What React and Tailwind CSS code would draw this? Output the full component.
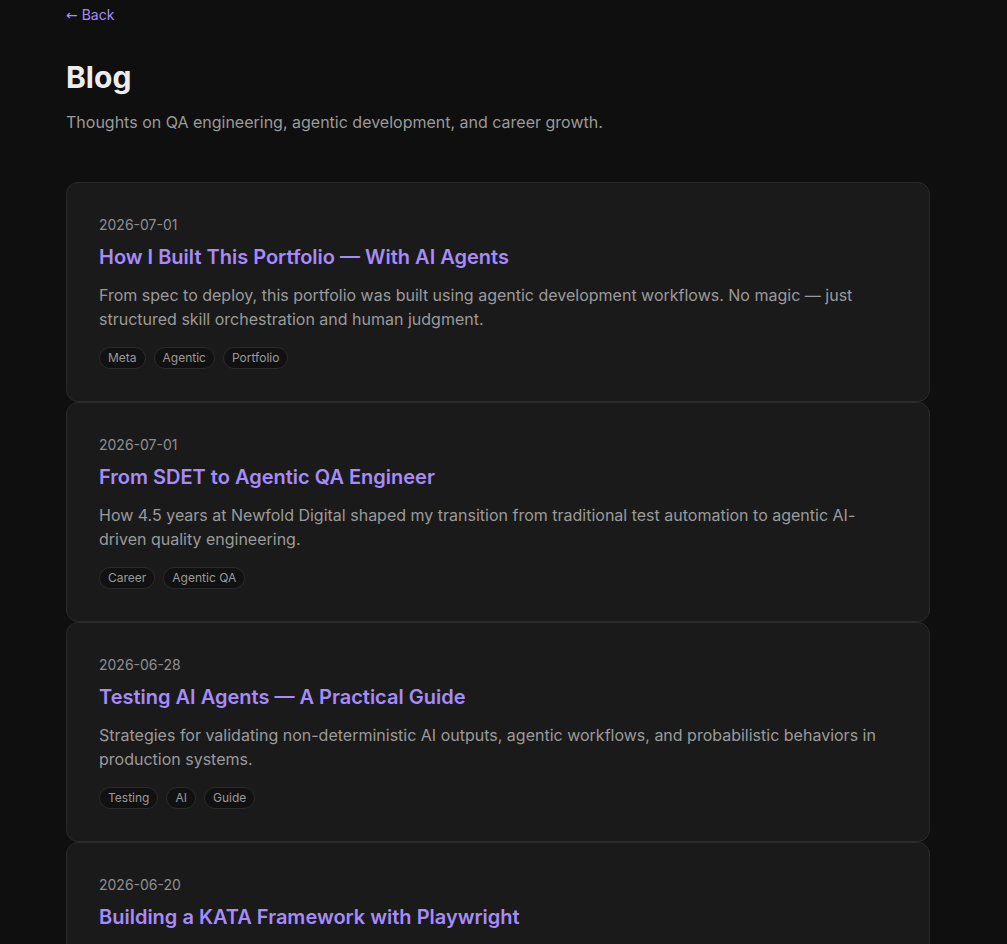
import React from 'react';

const posts = [
  {
    date: '2026-07-01',
    title: 'How I Built This Portfolio — With AI Agents',
    excerpt:
      'From spec to deploy, this portfolio was built using agentic development workflows. No magic — just structured skill orchestration and human judgment.',
    tags: ['Meta', 'Agentic', 'Portfolio'],
  },
  {
    date: '2026-07-01',
    title: 'From SDET to Agentic QA Engineer',
    excerpt:
      'How 4.5 years at Newfold Digital shaped my transition from traditional test automation to agentic AI-driven quality engineering.',
    tags: ['Career', 'Agentic QA'],
  },
  {
    date: '2026-06-28',
    title: 'Testing AI Agents — A Practical Guide',
    excerpt:
      'Strategies for validating non-deterministic AI outputs, agentic workflows, and probabilistic behaviors in production systems.',
    tags: ['Testing', 'AI', 'Guide'],
  },
  {
    date: '2026-06-20',
    title: 'Building a KATA Framework with Playwright',
    excerpt:
      'A walkthrough of structuring maintainable end-to-end suites with the KATA pattern, fixtures, and page objects in Playwright.',
    tags: ['Playwright', 'Framework'],
  },
];

const PostCard = ({ post }) => (
  <a
    href="#"
    className="block rounded-xl border border-[#2a2a2a] bg-[#1a1a1a] p-8"
  >
    <p className="text-sm leading-5 text-[#8f8f8f]">{post.date}</p>
    <h2 className="mt-2 text-xl leading-7 font-semibold text-[#a78bfa]">
      {post.title}
    </h2>
    <p className="mt-3 text-base leading-6 text-[#9a9a9a]">{post.excerpt}</p>
    <div className="mt-4 flex flex-wrap gap-2">
      {post.tags.map((tag) => (
        <span
          key={tag}
          className="rounded-full border border-[#2a2a2a] bg-[#111111] px-2 py-0.5 text-xs leading-4 text-[#9a9a9a]"
        >
          {tag}
        </span>
      ))}
    </div>
  </a>
);

export default function App() {
  return (
    <div
      className="min-h-screen bg-[#0f0f0f] pt-[2px] pb-16"
      style={{ fontFamily: 'Inter, "Noto Sans", sans-serif' }}
    >
      <main className="ml-[66px] w-[864px]">
        <a href="#" className="text-sm leading-5 text-[#a78bfa]">
          <span style={{ fontFamily: '"DejaVu Sans", sans-serif' }}>←</span> Back
        </a>
        <h1 className="mt-[33px] text-3xl leading-9 font-bold text-[#ededed]">
          Blog
        </h1>
        <p className="mt-[15px] text-base leading-6 text-[#9a9a9a]">
          Thoughts on QA engineering, agentic development, and career growth.
        </p>
        <div className="mt-12 flex flex-col">
          {posts.map((post) => (
            <PostCard key={post.title} post={post} />
          ))}
        </div>
      </main>
    </div>
  );
}
